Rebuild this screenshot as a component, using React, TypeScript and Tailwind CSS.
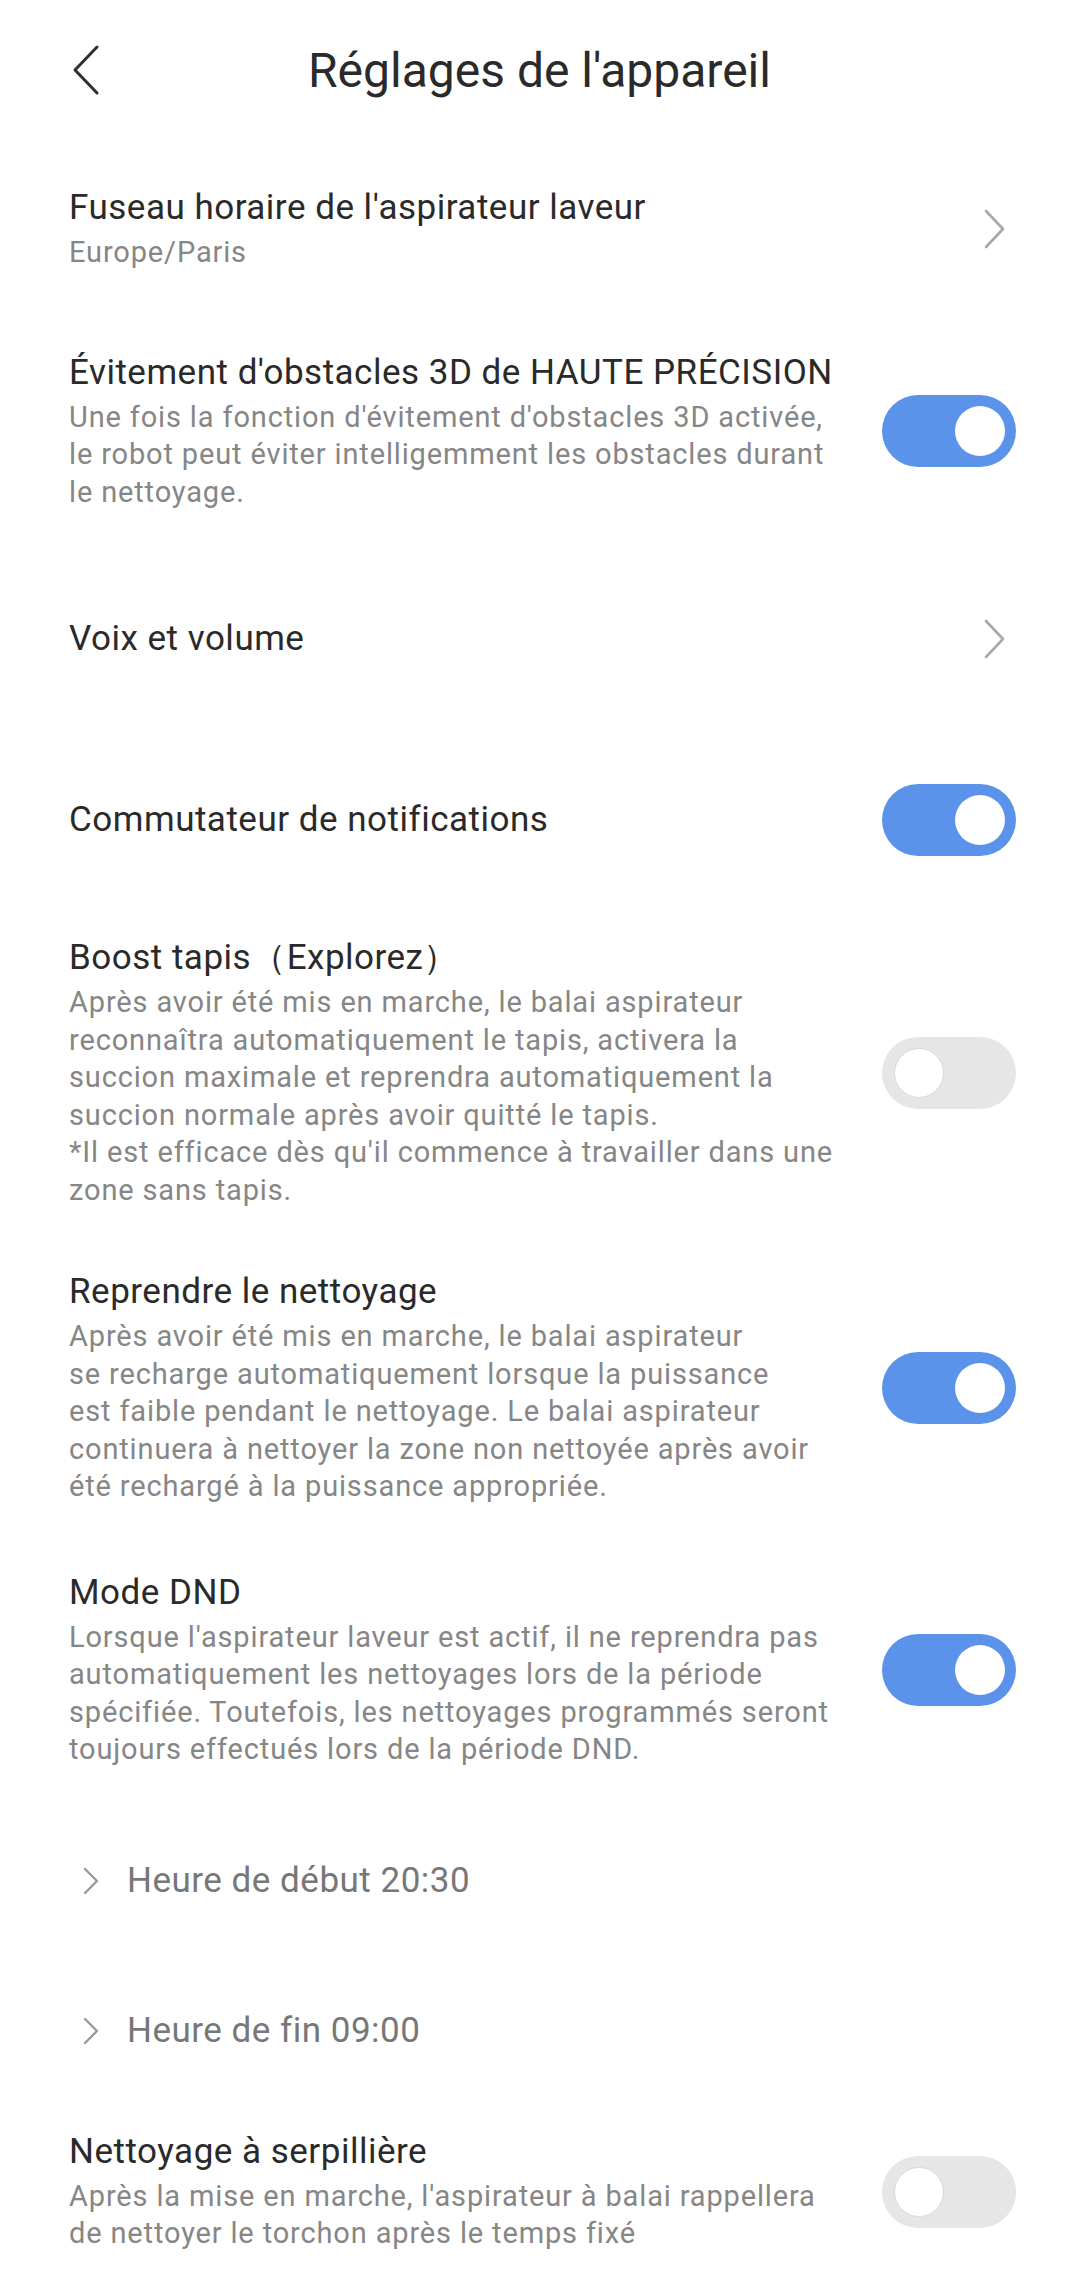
import type { ReactNode } from "react";

type Row = {
  title: string;
  lines?: string[];
  right: "chevron" | "on" | "off";
  gap: string;
};

const rows: Row[] = [
  {
    title: "Fuseau horaire de l'aspirateur laveur",
    lines: ["Europe/Paris"],
    right: "chevron",
    gap: "pt-[45px]",
  },
  {
    title: "Évitement d'obstacles 3D de HAUTE PRÉCISION",
    lines: [
      "Une fois la fonction d'évitement d'obstacles 3D activée,",
      "le robot peut éviter intelligemment les obstacles durant",
      "le nettoyage.",
    ],
    right: "on",
    gap: "pt-[80px]",
  },
  { title: "Voix et volume", right: "chevron", gap: "pt-[107px]" },
  { title: "Commutateur de notifications", right: "on", gap: "pt-[124px]" },
  {
    title: "Boost tapis（Explorez）",
    lines: [
      "Après avoir été mis en marche, le balai aspirateur",
      "reconnaîtra automatiquement le tapis, activera la",
      "succion maximale et reprendra automatiquement la",
      "succion normale après avoir quitté le tapis.",
      "*Il est efficace dès qu'il commence à travailler dans une",
      "zone sans tapis.",
    ],
    right: "off",
    gap: "pt-[81px]",
  },
  {
    title: "Reprendre le nettoyage",
    lines: [
      "Après avoir été mis en marche, le balai aspirateur",
      "se recharge automatiquement lorsque la puissance",
      "est faible pendant le nettoyage. Le balai aspirateur",
      "continuera à nettoyer la zone non nettoyée après avoir",
      "été rechargé à la puissance appropriée.",
    ],
    right: "on",
    gap: "pt-[62px]",
  },
  {
    title: "Mode DND",
    lines: [
      "Lorsque l'aspirateur laveur est actif, il ne reprendra pas",
      "automatiquement les nettoyages lors de la période",
      "spécifiée. Toutefois, les nettoyages programmés seront",
      "toujours effectués lors de la période DND.",
    ],
    right: "on",
    gap: "pt-[66px]",
  },
];

function Toggle({ on }: { on: boolean }) {
  return (
    <div
      className={
        on
          ? "flex h-[72px] w-[134px] shrink-0 items-center justify-end rounded-full bg-[#5b92ea] px-[11px]"
          : "flex h-[72px] w-[134px] shrink-0 items-center justify-start rounded-full bg-[#e6e6e6] px-[12px]"
      }
    >
      <div
        className={
          on
            ? "h-[50px] w-[50px] rounded-full bg-white"
            : "h-[50px] w-[50px] rounded-full border border-[#d9d9d9] bg-white"
        }
      />
    </div>
  );
}

function Chevron() {
  return (
    <svg width="24" height="40" viewBox="0 0 24 40" className="mr-[9px] shrink-0" aria-hidden="true">
      <path d="M3 2 L20 20 L3 38" fill="none" stroke="#a8a8a8" strokeWidth="2.6" strokeLinecap="round" strokeLinejoin="round" />
    </svg>
  );
}

function SmallChevron() {
  return (
    <svg width="18" height="28" viewBox="0 0 18 28" className="shrink-0" aria-hidden="true">
      <path d="M3 2 L15 14 L3 26" fill="none" stroke="#9a9a9a" strokeWidth="2.4" strokeLinecap="round" strokeLinejoin="round" />
    </svg>
  );
}

function SettingRow({ row }: { row: Row }) {
  let right: ReactNode = null;
  if (row.right === "chevron") right = <Chevron />;
  else right = <Toggle on={row.right === "on"} />;

  return (
    <div className={row.gap}>
      <div className="flex items-center justify-between">
        <div className="min-w-0">
          <p className="whitespace-nowrap text-[35px] leading-[42px] tracking-[0.5px] text-[#2a2a2a]">
            {row.title}
          </p>
          {row.lines ? (
            <div className="mt-[5px] text-[29px] leading-[37.5px] tracking-[0.85px] text-[#868686]">
              {row.lines.map((line) => (
                <p key={line} className="whitespace-nowrap">
                  {line}
                </p>
              ))}
            </div>
          ) : null}
        </div>
        {right}
      </div>
    </div>
  );
}

function TimeRow({ label, gap }: { label: string; gap: string }) {
  return (
    <div className={gap}>
      <div className="flex items-center gap-[27px] pl-[13px]">
        <SmallChevron />
        <p className="whitespace-nowrap text-[35px] leading-[42px] tracking-[0.5px] text-[#777777]">{label}</p>
      </div>
    </div>
  );
}

export default function App() {
  return (
    <div
      className="min-h-[2289px] w-[1079px] bg-white"
      style={{ fontFamily: "Roboto, 'Noto Sans', sans-serif" }}
    >
      <header className="relative flex h-[142px] items-center justify-center">
        <button type="button" className="absolute left-[66px] top-[40px] p-[4px]" aria-label="Retour">
          <svg width="32" height="52" viewBox="0 0 32 52" aria-hidden="true">
            <path d="M27 3 L5 26 L27 49" fill="none" stroke="#2e2e2e" strokeWidth="3" strokeLinecap="round" strokeLinejoin="round" />
          </svg>
        </button>
        <h1 className="text-[48px] leading-[56px] font-normal text-[#2a2a2a]">Réglages de l'appareil</h1>
      </header>

      <div className="pl-[69px] pr-[63px]">
        {rows.map((row) => (
          <SettingRow key={row.title} row={row} />
        ))}
      </div>

      <div className="pl-[69px] pr-[63px]">
        <TimeRow label="Heure de début 20:30" gap="pt-[91px]" />
        <TimeRow label="Heure de fin 09:00" gap="pt-[108px]" />
        <SettingRow
          row={{
            title: "Nettoyage à serpillière",
            lines: [
              "Après la mise en marche, l'aspirateur à balai rappellera",
              "de nettoyer le torchon après le temps fixé",
            ],
            right: "off",
            gap: "pt-[79px]",
          }}
        />
      </div>
    </div>
  );
}
